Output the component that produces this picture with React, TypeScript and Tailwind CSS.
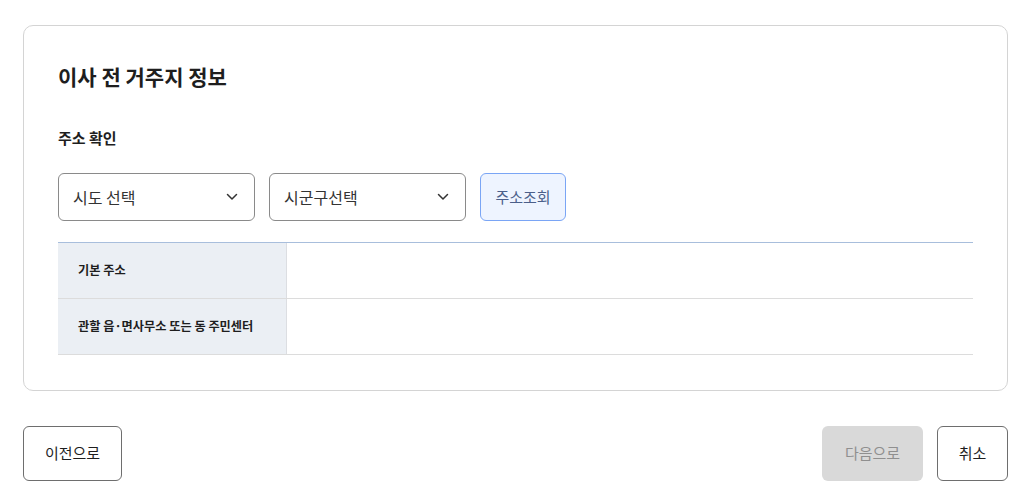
import React from "react";

function Chevron() {
  return (
    <svg width="12" height="8" viewBox="0 0 12 8" fill="none" className="shrink-0">
      <path d="M1.5 1.5L6 6L10.5 1.5" stroke="#333" strokeWidth="1.5" strokeLinecap="round" strokeLinejoin="round" />
    </svg>
  );
}

function Select({ label }: { label: string }) {
  return (
    <div className="w-[197px] h-[48px] border border-[#8a8a8a] rounded-[6px] flex items-center justify-between pl-[14px] pr-[16px] bg-white">
      <span className="text-[16px] text-[#333]">{label}</span>
      <Chevron />
    </div>
  );
}

export default function App() {
  return (
    <div
      className="w-full h-[499px] bg-white pl-[23px] pr-[16px] pt-[25px]"
      style={{ fontFamily: '"Noto Sans CJK KR", "Noto Sans", sans-serif' }}
    >
      <div className="border border-[#d4d4d4] rounded-[10px] px-[34px] pt-[35px] pb-[35px]">
        <h2 className="text-[21px] leading-[30px] font-bold text-[#1e1e1e]">이사 전 거주지 정보</h2>
        <h3 className="mt-[36px] text-[15px] leading-[22px] font-bold text-[#1e1e1e]">주소 확인</h3>
        <div className="mt-[24px] flex gap-[14px]">
          <Select label="시도 선택" />
          <Select label="시군구선택" />
          <button className="w-[86px] h-[48px] border border-[#7aa5f5] rounded-[6px] bg-[#eef4ff] text-[15px] text-[#4b5f8a]">
            주소조회
          </button>
        </div>
        <div className="mt-[21px] border-t border-[#a8bedc]">
          <div className="flex h-[56px] border-b border-[#dcdcdc]">
            <div className="w-[229px] bg-[#ebeff4] border-r border-[#dcdee2] flex items-center pl-[20px] text-[12.2px] font-bold text-[#1e1e1e]">
              기본 주소
            </div>
            <div className="flex-1" />
          </div>
          <div className="flex h-[56px] border-b border-[#dcdcdc]">
            <div className="w-[229px] bg-[#ebeff4] border-r border-[#dcdee2] flex items-center pl-[20px] text-[12.2px] font-bold text-[#1e1e1e]">
              관할 읍·면사무소 또는 동 주민센터
            </div>
            <div className="flex-1" />
          </div>
        </div>
      </div>
      <div className="mt-[35px] flex justify-between">
        <button className="w-[99px] h-[55px] border border-[#6e6e6e] rounded-[6px] bg-white text-[15px] text-[#1e1e1e]">
          이전으로
        </button>
        <div className="flex gap-[14px]">
          <button className="w-[101px] h-[55px] rounded-[6px] bg-[#d9d9d9] text-[15px] text-[#8f8f8f]">
            다음으로
          </button>
          <button className="w-[71px] h-[55px] border border-[#6e6e6e] rounded-[6px] bg-white text-[15px] text-[#1e1e1e]">
            취소
          </button>
        </div>
      </div>
    </div>
  );
}
